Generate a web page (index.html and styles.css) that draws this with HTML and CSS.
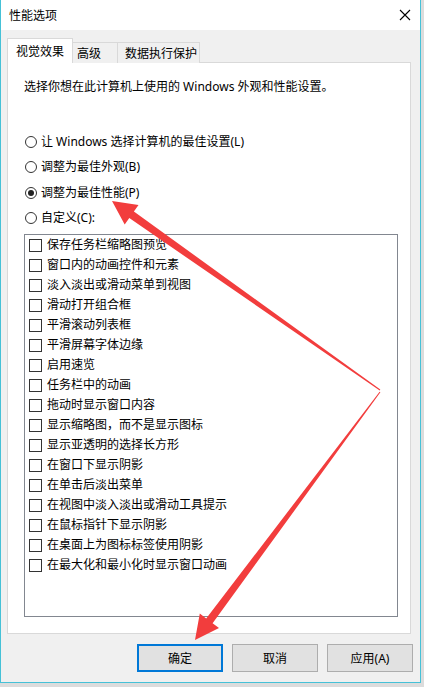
FILE: index.html
```html
<!DOCTYPE html>
<html lang="zh-CN">
<head>
    <meta charset="UTF-8">
    <meta name="viewport" content="width=device-width, initial-scale=1.0">
    <title>性能选项</title>
    <link rel="stylesheet" href="styles.css">
</head>
<body>
    <div class="window">
        <div class="titlebar">
            <span class="title">性能选项</span>
            <svg class="close" width="12" height="12" viewBox="0 0 12 12">
                <path d="M1 1 L11 11 M11 1 L1 11" stroke="#000" stroke-width="1.1" fill="none"/>
            </svg>
        </div>
        <div class="content">
            <div class="tabs">
                <div class="tab active">视觉效果</div>
                <div class="tab">高级</div>
                <div class="tab">数据执行保护</div>
            </div>
            <div class="panel">
                <p class="intro">选择你想在此计算机上使用的 Windows 外观和性能设置。</p>
                <div class="options">
                    <label class="radio"><span class="dot"></span>让 Windows 选择计算机的最佳设置(L)</label>
                    <label class="radio"><span class="dot"></span>调整为最佳外观(B)</label>
                    <label class="radio checked"><span class="dot"></span>调整为最佳性能(P)</label>
                    <label class="radio"><span class="dot"></span>自定义(C):</label>
                </div>
                <div class="listbox">
                    <div class="item"><span class="box"></span>保存任务栏缩略图预览</div>
                    <div class="item"><span class="box"></span>窗口内的动画控件和元素</div>
                    <div class="item"><span class="box"></span>淡入淡出或滑动菜单到视图</div>
                    <div class="item"><span class="box"></span>滑动打开组合框</div>
                    <div class="item"><span class="box"></span>平滑滚动列表框</div>
                    <div class="item"><span class="box"></span>平滑屏幕字体边缘</div>
                    <div class="item"><span class="box"></span>启用速览</div>
                    <div class="item"><span class="box"></span>任务栏中的动画</div>
                    <div class="item"><span class="box"></span>拖动时显示窗口内容</div>
                    <div class="item"><span class="box"></span>显示缩略图，而不是显示图标</div>
                    <div class="item"><span class="box"></span>显示亚透明的选择长方形</div>
                    <div class="item"><span class="box"></span>在窗口下显示阴影</div>
                    <div class="item"><span class="box"></span>在单击后淡出菜单</div>
                    <div class="item"><span class="box"></span>在视图中淡入淡出或滑动工具提示</div>
                    <div class="item"><span class="box"></span>在鼠标指针下显示阴影</div>
                    <div class="item"><span class="box"></span>在桌面上为图标标签使用阴影</div>
                    <div class="item"><span class="box"></span>在最大化和最小化时显示窗口动画</div>
                </div>
            </div>
            <div class="buttons">
                <button class="btn default">确定</button>
                <button class="btn">取消</button>
                <button class="btn">应用(A)</button>
            </div>
        </div>
    </div>

    <!-- red annotation arrows drawn over the dialog -->
    <svg class="arrows" width="424" height="687" viewBox="0 0 424 687">
        <polygon fill="#f23d3d" points="379.7,390.4 380.3,389.6 133.9,211.5 138.5,205 112,201 124.7,224.6 129.3,218.1"/>
        <polygon fill="#f23d3d" points="379.6,391.7 380.4,392.3 212.6,623.2 219,628 195,640 199.8,613.6 206.2,618.4"/>
    </svg>
</body>
</html>
```

FILE: styles.css
```css
body {
    margin: 0;
    background-color: #dcdcdc;
    font-family: "Noto Sans", "Noto Sans CJK SC", sans-serif;
    font-size: 12px;
    color: #000;
}
.window {
    width: 421px;
    height: 683px;
    box-sizing: border-box;
    border: 1px solid #45c1d7;
    border-top: none;
    background-color: #f0f0f0;
    display: flex;
    flex-direction: column;
}
.titlebar {
    height: 29px;
    background-color: #fff;
    display: flex;
    align-items: center;
    justify-content: space-between;
    padding: 0 9px 1px 8px;
    flex-shrink: 0;
}
.title {
    font-family: "Noto Sans CJK SC", sans-serif;
    line-height: 16px;
}
.close {
    margin-right: 0;
}
.content {
    flex: 1;
    display: flex;
    flex-direction: column;
    padding: 9px 10px 0 6px;
}
.tabs {
    display: flex;
    align-items: flex-end;
    height: 24px;
    position: relative;
    z-index: 1;
    margin-bottom: -1px;
}
.tab {
    height: 21px;
    box-sizing: border-box;
    border: 1px solid #d9d9d9;
    border-bottom: none;
    border-left: none;
    background-color: #f0f0f0;
    line-height: 20px;
    padding: 0 0 0 4px;
    font-family: "Noto Sans CJK SC", sans-serif;
}
.tab:nth-child(2) {
    width: 45px;
}
.tab:nth-child(3) {
    width: 82px;
    padding-left: 7px;
}
.tab.active {
    height: 25px;
    width: 66px;
    border-left: 1px solid #d9d9d9;
    background-color: #fff;
    padding-left: 8px;
    line-height: 24px;
}
.panel {
    width: 404px;
    height: 572px;
    box-sizing: border-box;
    background-color: #fff;
    border: 1px solid #d9d9d9;
    padding: 16px 12px 0 16px;
}
.intro {
    margin: 0 0 34px;
    line-height: 16px;
}
.options {
    display: flex;
    flex-direction: column;
}
.radio {
    height: 25.5px;
    display: flex;
    align-items: center;
    line-height: 16px;
}
.dot {
    width: 12px;
    height: 12px;
    box-sizing: border-box;
    border: 1px solid #333;
    border-radius: 50%;
    margin: 0 4px 0 1px;
    position: relative;
    flex-shrink: 0;
}
.radio.checked .dot::after {
    content: "";
    position: absolute;
    left: 2px;
    top: 2px;
    width: 6px;
    height: 6px;
    border-radius: 50%;
    background-color: #222;
}
.listbox {
    margin-top: 3px;
    height: 383px;
    box-sizing: border-box;
    border: 1px solid #828790;
    display: flex;
    flex-direction: column;
}
.item {
    height: 20px;
    display: flex;
    align-items: center;
    line-height: 16px;
}
.box {
    width: 13px;
    height: 13px;
    box-sizing: border-box;
    border: 1px solid #333;
    margin: 0 5px 0 4px;
    flex-shrink: 0;
}
.buttons {
    display: flex;
    justify-content: flex-end;
    gap: 9px;
    margin-top: 10px;
    margin-right: -3px;
}
.btn {
    width: 86px;
    height: 28px;
    background-color: #e1e1e1;
    border: 1px solid #adadad;
    font-family: "Noto Sans", "Noto Sans CJK SC", sans-serif;
    font-size: 12px;
    color: #000;
    padding: 0;
}
.btn.default {
    border: 2px solid #0078d7;
}
.arrows {
    position: absolute;
    top: 0;
    left: 0;
    pointer-events: none;
}
```
